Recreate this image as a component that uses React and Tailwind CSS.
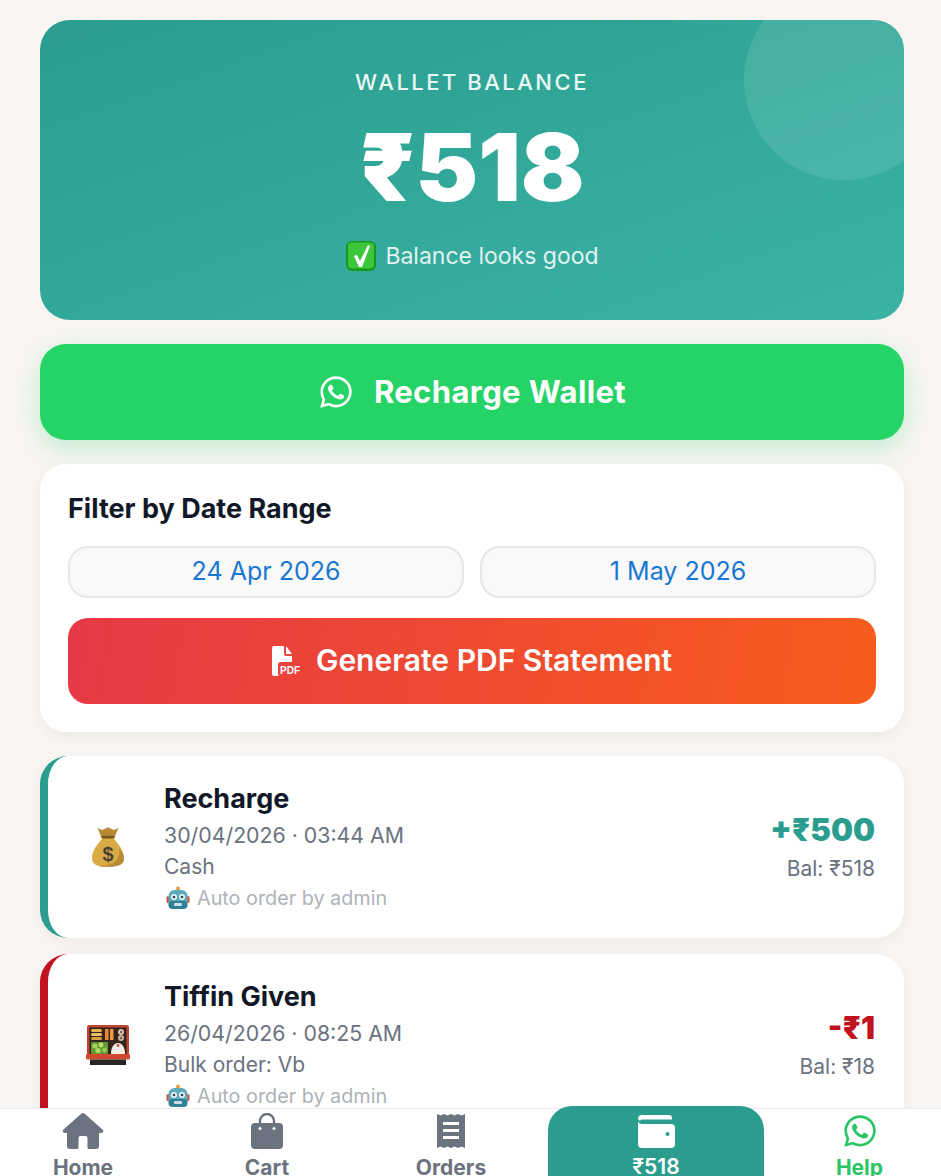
import { IoLogoWhatsapp } from "react-icons/io5";

const body = { fontFamily: '"Inter", "Noto Sans", sans-serif' };

function CheckEmoji() {
  return (
    <svg width="32" height="32" viewBox="0 0 32 32" className="shrink-0">
      <rect x="1" y="1" width="30" height="30" rx="6" fill="#149a1c" />
      <rect x="3" y="2.5" width="26" height="26" rx="4" fill="#3cc63c" />
      <path d="M9 16l3-1 3 6L23 5l2 1-8 21h-3z" fill="#ffffff" />
    </svg>
  );
}

function MoneyBag() {
  return (
    <svg width="34" height="44" viewBox="0 0 36 44">
      <path d="M7 2l5 2 6-3 6 3 5-2-4 10H11z" fill="#b98a35" />
      <rect x="11" y="10" width="14" height="3.5" rx="1.7" fill="#7d5a1c" />
      <path d="M12 13h12c4 5 11 12 11 21 0 7-6 9-17 9S1 41 1 34c0-9 7-16 11-21z" fill="#d9ab45" />
      <path d="M30 24c3 4 5 7 5 10 0 7-6 9-17 9-4 0-7-.3-10-1 12 0 23-3 22-18z" fill="#b98a35" />
      <text x="18" y="37" textAnchor="middle" fontSize="21" fontWeight="700" fill="#4a4030" fontFamily="Liberation Sans">$</text>
    </svg>
  );
}

function Bento() {
  return (
    <svg width="46" height="42" viewBox="0 0 46 42">
      <rect x="2" y="1" width="42" height="34" rx="2" fill="#c2452f" />
      <rect x="4.5" y="3.5" width="37" height="27" fill="#33241d" />
      <rect x="6" y="5" width="11" height="3" rx="1.5" fill="#e8b54a" />
      <rect x="6" y="9" width="11" height="3" rx="1.5" fill="#e9c268" />
      <rect x="6" y="13" width="11" height="3" rx="1.5" fill="#d9a23c" />
      <rect x="20" y="5" width="3.5" height="11" fill="#ee8a2c" />
      <rect x="25" y="5" width="3.5" height="11" fill="#f09a3c" />
      <circle cx="36" cy="8" r="3" fill="#d8c8b0" />
      <circle cx="36" cy="8" r="1.2" fill="#7c5a44" />
      <circle cx="36" cy="14" r="3" fill="#cbb8a0" />
      <circle cx="36" cy="14" r="1.2" fill="#7c5a44" />
      <rect x="6" y="18" width="17" height="12" rx="1" fill="#5f9a33" />
      <circle cx="10" cy="22" r="2.6" fill="#a8d25a" />
      <circle cx="16" cy="21" r="2.4" fill="#c0de72" />
      <circle cx="13" cy="26.5" r="2.6" fill="#b4d864" />
      <circle cx="19.5" cy="26" r="2.4" fill="#98c84e" />
      <path d="M26 30c0-7 3-11 7-11s7 4 7 11z" fill="#f3ece6" />
      <circle cx="33" cy="21.5" r="1.4" fill="#d2453a" />
      <rect x="1" y="30" width="44" height="5.5" rx="1" fill="#d0492e" />
      <rect x="5" y="35.5" width="36" height="5.5" fill="#2a2624" />
    </svg>
  );
}

function Robot() {
  return (
    <svg width="24" height="24" viewBox="0 0 24 24" className="shrink-0">
      <circle cx="12" cy="2.5" r="2" fill="#e89a3c" />
      <rect x="0.5" y="10" width="3" height="7" rx="1.5" fill="#c4593f" />
      <rect x="20.5" y="10" width="3" height="7" rx="1.5" fill="#c4593f" />
      <rect x="2.5" y="4" width="19" height="19" rx="6" fill="#5fa9bd" />
      <rect x="2.5" y="15" width="19" height="8" rx="4" fill="#2f7f97" />
      <circle cx="8" cy="11" r="3" fill="#e9f4f6" />
      <circle cx="16" cy="11" r="3" fill="#e9f4f6" />
      <circle cx="8" cy="11" r="1.3" fill="#333f46" />
      <circle cx="16" cy="11" r="1.3" fill="#333f46" />
      <rect x="8" y="17" width="8" height="3" rx="1" fill="#c8dfe5" />
    </svg>
  );
}

function HomeIcon() {
  return (
    <svg width="42" height="36" viewBox="0 0 42 36" fill="#6b7280">
      <path d="M19 1a3 3 0 0 1 4 0l17.500 15.500c1.500 1.400.6 3.500-1.300 3.500H37v13a3 3 0 0 1-3 3h-7a1.500 1.500 0 0 1-1.500-1.500V25a2 2 0 0 0-2-2h-5a2 2 0 0 0-2 2v9.500A1.500 1.500 0 0 1 15 36H8a3 3 0 0 1-3-3V20H2.800c-1.900 0-2.800-2.100-1.300-3.500z" />
    </svg>
  );
}

function BagIcon() {
  return (
    <svg width="32" height="36" viewBox="0 0 32 36">
      <path d="M9 13V8a7 7 0 0 1 14 0v5" fill="none" stroke="#6b7280" strokeWidth="2.400" />
      <rect x="0" y="10" width="32" height="26" rx="4" fill="#6b7280" />
      <circle cx="9" cy="15.500" r="1.500" fill="#ffffff" />
      <circle cx="23" cy="15.500" r="1.500" fill="#ffffff" />
    </svg>
  );
}

function ReceiptIcon() {
  return (
    <svg width="28" height="36" viewBox="0 0 28 36">
      <path d="M0 1l3.500 1.500L7 1l3.500 1.500L14 1l3.500 1.500L21 1l3.500 1.500L28 1v34l-3.500-1.500L21 35l-3.500-1.500L14 35l-3.500-1.500L7 35l-3.500-1.500L0 35z" fill="#6b7280" />
      <rect x="6" y="9" width="16" height="3" fill="#ffffff" />
      <rect x="6" y="16" width="16" height="3" fill="#ffffff" />
      <rect x="6" y="23" width="16" height="3" fill="#ffffff" />
    </svg>
  );
}

function WalletIcon() {
  return (
    <svg width="37" height="33" viewBox="0 0 37 33">
      <path d="M4 0h27a3 3 0 0 1 3 3v1.500H4a2 2 0 0 0-2 1.500L0 4a4 4 0 0 1 4-4z" fill="#ffffff" />
      <path d="M0 6c0 1.500 1.500 3 4 3h29a4 4 0 0 1 4 4v16a4 4 0 0 1-4 4H4a4 4 0 0 1-4-4z" fill="#ffffff" />
      <circle cx="29.500" cy="19" r="2" fill="#2a9d8f" />
    </svg>
  );
}

function Tx({ icon, title, date, note, amount, bal, tone, border }) {
  return (
    <div className={`flex items-center h-[182px] shrink-0 bg-white rounded-[28px] border-l-8 ${border} shadow-[0_4px_16px_rgba(60,40,20,0.05)] pl-[16px] pr-[29px]`}>
      <div className="w-[88px] flex justify-center shrink-0">{icon}</div>
      <div className="w-[12px] shrink-0" />
      <div className="flex-1 flex flex-col">
        <div className="text-[27px] leading-[34px] font-bold text-[#111827]">{title}</div>
        <div className="text-[21.300px] leading-[32px] text-[#6b7280] mt-[3px]">{date}</div>
        <div className="text-[21px] leading-[32px] text-[#6b7280]">{note}</div>
        <div className="flex items-center gap-[7px] text-[19.800px] leading-[30px] text-[#aeb2b8] pl-[2px]">
          <Robot />
          <span>Auto order by admin</span>
        </div>
      </div>
      <div className="flex flex-col items-end">
        <div className={`text-[31px] leading-[38px] font-black ${tone}`}>{amount}</div>
        <div className="text-[21px] leading-[30px] text-[#6b7280] mt-[5px]">{bal}</div>
      </div>
    </div>
  );
}

function NavItem({ icon, label, className, text = "text-[#6b7280]" }) {
  return (
    <div className={`flex flex-col items-center ${className}`}>
      <div className="h-[40px] pt-[4px] flex items-start justify-center">{icon}</div>
      <span className={`text-[21px] leading-[26px] font-bold mt-[6px] ${text}`}>{label}</span>
    </div>
  );
}

export default function App() {
  return (
    <div className="relative h-screen overflow-hidden bg-[#f8f5f2]" style={body}>
      <div className="flex flex-col gap-[24px] pl-[40px] pr-[37px] pt-[20px]">
        <div className="relative overflow-hidden h-[300px] shrink-0 rounded-[30px] bg-gradient-to-br from-[#2a9d8f] to-[#3ab3a4] flex flex-col items-center text-white">
          <div className="absolute -top-[40px] -right-[40px] w-[200px] h-[200px] rounded-full bg-white/10" />
          <div className="mt-[47px] text-[22px] leading-[30px] tracking-[2.500px] font-medium text-white/90">WALLET BALANCE</div>
          <div className="mt-[15px] text-[94px] leading-[110px] font-black">₹518</div>
          <div className="mt-[18px] flex items-center gap-[8px] text-[23px] leading-[32px] text-white/85">
            <CheckEmoji />
            <span>Balance looks good</span>
          </div>
        </div>

        <div className="h-[96px] shrink-0 rounded-[26px] bg-[#25d366] shadow-[0_8px_24px_rgba(37,211,102,0.25)] flex items-center justify-center gap-[20px] text-white">
          <IoLogoWhatsapp className="w-[36px] h-[36px]" />
          <span className="text-[31px] tracking-[0.400px] font-bold">Recharge Wallet</span>
        </div>

        <div className="h-[268px] shrink-0 rounded-[26px] bg-white shadow-[0_4px_16px_rgba(60,40,20,0.05)] p-[28px] flex flex-col">
          <div className="text-[27px] leading-[34px] font-bold text-[#111827]">Filter by Date Range</div>
          <div className="mt-[20px] flex gap-[16px]">
            <div className="flex-1 h-[52px] rounded-[20px] bg-[#f9f9f9] border-2 border-[#e5e7eb] flex items-center justify-center text-[25px] text-[#1976d2]">24 Apr 2026</div>
            <div className="flex-1 h-[52px] rounded-[20px] bg-[#f9f9f9] border-2 border-[#e5e7eb] flex items-center justify-center text-[25px] text-[#1976d2]">1 May 2026</div>
          </div>
          <div className="mt-[20px] h-[86px] rounded-[20px] bg-[linear-gradient(100deg,#e63946,#f85c1c)] flex items-center justify-center gap-[16px] text-white">
            <svg width="28" height="30" viewBox="0 0 28 30" fill="#ffffff">
              <path d="M2 0h10v8a2 2 0 0 0 2 2h6v6H9a3 3 0 0 0-3 3v8a3 3 0 0 0 .4 1.500V30H2a2 2 0 0 1-2-2V2a2 2 0 0 1 2-2z" />
              <path d="M14 0l6 8h-6z" />
              <text x="8" y="28" fontSize="10" fontWeight="700" fontFamily="Liberation Sans">PDF</text>
            </svg>
            <span className="text-[30px] leading-[36px] font-semibold -mt-[2px]">Generate PDF Statement</span>
          </div>
        </div>

        <div className="flex flex-col gap-[16px]">
          <Tx
            icon={<MoneyBag />}
            title="Recharge"
            date="30/04/2026 · 03:44 AM"
            note="Cash"
            amount="+₹500"
            bal="Bal: ₹518"
            tone="text-[#2a9d8f]"
            border="border-[#2a9d8f]"
          />
          <Tx
            icon={<Bento />}
            title="Tiffin Given"
            date="26/04/2026 · 08:25 AM"
            note="Bulk order: Vb"
            amount="-₹1"
            bal="Bal: ₹18"
            tone="text-[#c1121f]"
            border="border-[#c1121f]"
          />
        </div>
      </div>

      <div className="absolute bottom-0 left-0 right-0 h-[68px] bg-white border-t border-[#eeeeee] flex">
        <NavItem className="w-[166px]" icon={<HomeIcon />} label="Home" />
        <NavItem className="w-[202px]" icon={<BagIcon />} label="Cart" />
        <NavItem className="w-[166px]" icon={<ReceiptIcon />} label="Orders" />
        <div className="relative w-[216px] ml-[14px] -mt-[3px] h-[80px] rounded-t-[24px] bg-[#2a9d8f] flex flex-col items-center pt-[9px] text-white">
          <WalletIcon />
          <span className="text-[21px] leading-[26px] font-semibold mt-[6px]">₹518</span>
        </div>
        <NavItem className="flex-1 pl-[14px]" icon={<IoLogoWhatsapp className="w-[36px] h-[36px] text-[#2bc566]" />} label="Help" text="text-[#2bc566]" />
      </div>
    </div>
  );
}
